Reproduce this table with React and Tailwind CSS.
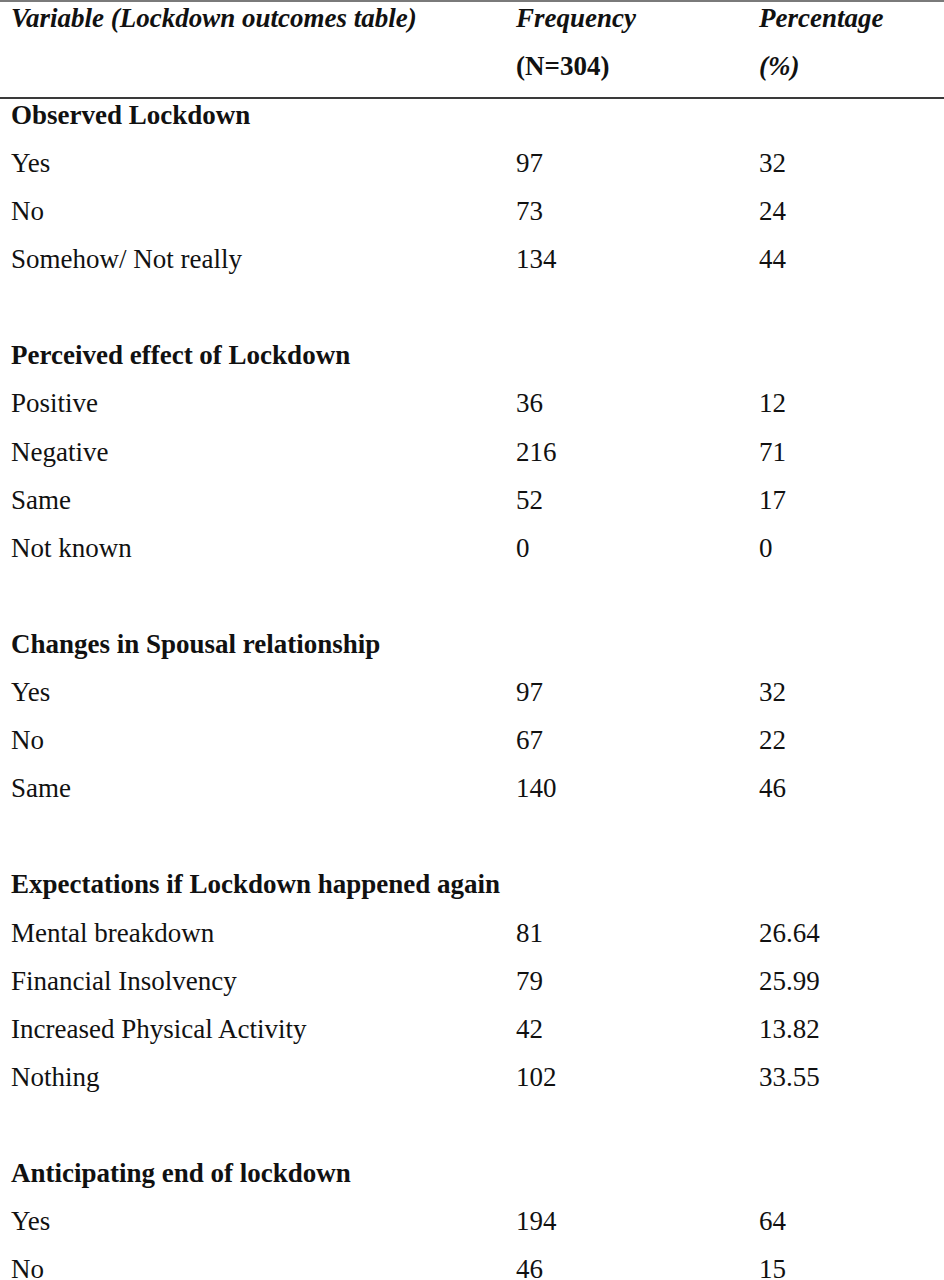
import React from 'react'

const sections = [
  {
    title: 'Observed Lockdown',
    rows: [
      ['Yes', '97', '32'],
      ['No', '73', '24'],
      ['Somehow/ Not really', '134', '44'],
    ],
  },
  {
    title: 'Perceived effect of Lockdown',
    rows: [
      ['Positive', '36', '12'],
      ['Negative', '216', '71'],
      ['Same', '52', '17'],
      ['Not known', '0', '0'],
    ],
  },
  {
    title: 'Changes in Spousal relationship',
    rows: [
      ['Yes', '97', '32'],
      ['No', '67', '22'],
      ['Same', '140', '46'],
    ],
  },
  {
    title: 'Expectations if Lockdown happened again',
    rows: [
      ['Mental breakdown', '81', '26.64'],
      ['Financial Insolvency', '79', '25.99'],
      ['Increased Physical Activity', '42', '13.82'],
      ['Nothing', '102', '33.55'],
    ],
  },
  {
    title: 'Anticipating end of lockdown',
    rows: [
      ['Yes', '194', '64'],
      ['No', '46', '15'],
    ],
  },
]

function Row({ cells, bold, first }) {
  const h = first ? 'h-[40px] leading-[32px]' : 'h-[48.1px] leading-[48px]'
  return (
    <div className={`grid grid-cols-[505px_243px_1fr] pl-[11px] whitespace-nowrap ${h} ${bold ? 'font-bold' : ''}`}>
      <div>{cells[0]}</div>
      <div>{cells[1]}</div>
      <div>{cells[2]}</div>
    </div>
  )
}

export default function App() {
  return (
    <div className="w-[944px] h-[1280px] overflow-hidden bg-white text-[#111] text-[27px]" style={{ fontFamily: '"Liberation Serif", "Times New Roman", serif' }}>
      {/* header */}
      <div className="h-[99px] border-t-2 border-b-2 border-t-[#7a7a7a] border-b-[#3a3a3a] font-bold">
        <div className="grid grid-cols-[505px_243px_1fr] pl-[11px] h-[40px] leading-[32px] italic whitespace-nowrap">
          <div>Variable (Lockdown outcomes table)</div>
          <div>Frequency</div>
          <div>Percentage</div>
        </div>
        <div className="grid grid-cols-[505px_243px_1fr] pl-[11px] h-[48px] leading-[48px] whitespace-nowrap">
          <div></div>
          <div>(N=304)</div>
          <div className="italic">(%)</div>
        </div>
      </div>

      {sections.map((s, i) => (
        <div key={s.title}>
          {i > 0 && <Row cells={['', '', '']} />}
          <Row cells={[s.title, '', '']} bold first={i === 0} />
          {s.rows.map((r, j) => (
            <Row key={j} cells={r} />
          ))}
        </div>
      ))}
    </div>
  )
}
